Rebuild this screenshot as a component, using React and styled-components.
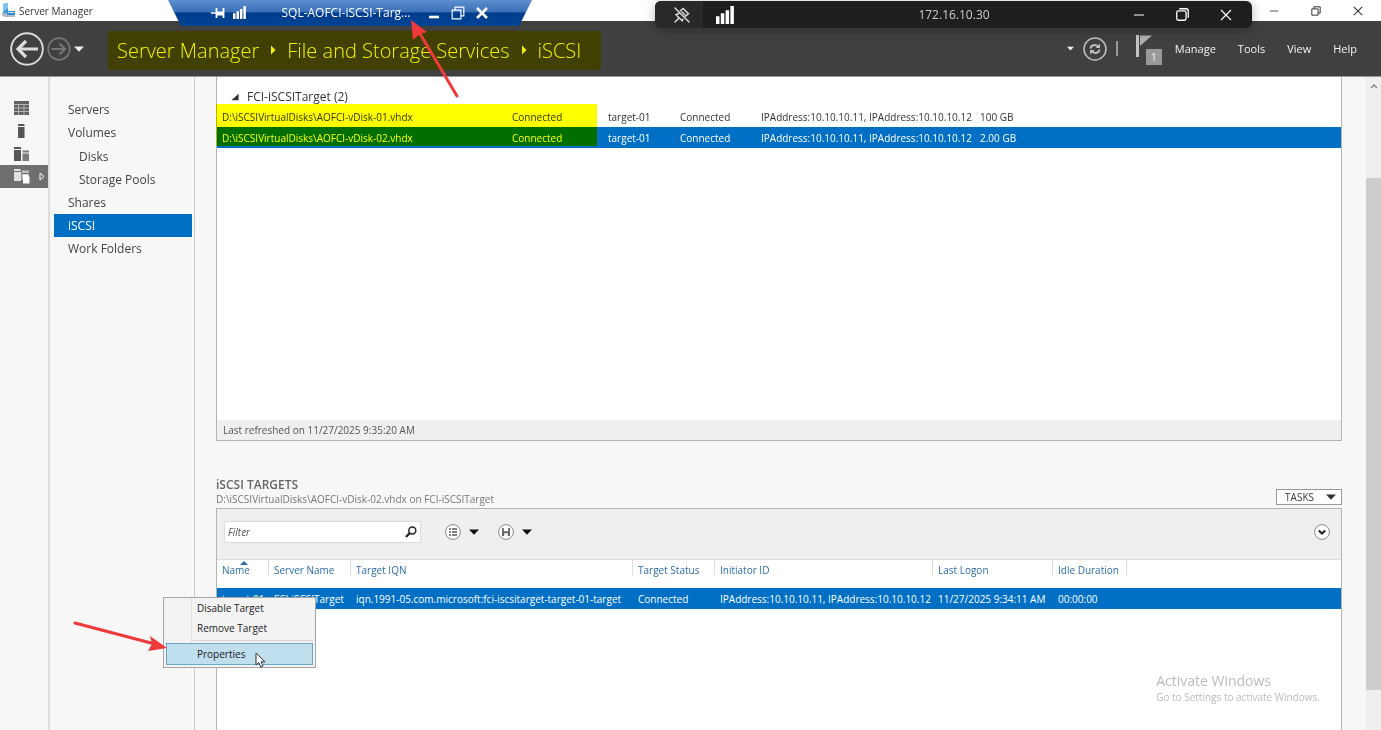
import React from "react";
import styled, { createGlobalStyle, css } from "styled-components";

const disks = [
    { path: "D:\\iSCSIVirtualDisks\\AOFCI-vDisk-01.vhdx", size: "100 GB" },
    { path: "D:\\iSCSIVirtualDisks\\AOFCI-vDisk-02.vhdx", size: "2.00 GB", selected: true },
];

const initiators = "IPAddress:10.10.10.11, IPAddress:10.10.10.12";

const targetColumns = [
    { label: "Name", width: 52, sorted: true },
    { label: "Server Name", width: 82 },
    { label: "Target IQN", width: 282 },
    { label: "Target Status", width: 82 },
    { label: "Initiator ID", width: 218 },
    { label: "Last Logon", width: 120 },
    { label: "Idle Duration", width: 74 },
];

const diskColumns = [290, 96, 72, 81, 219];

const Arrow = ({ size = 10, dir = "down" }) => (
    <svg width={size} height={size} viewBox="0 0 10 10" fill="currentColor" aria-hidden="true">
        {dir === "down" && <path d="M0 2.5h10L5 7.8z" />}
        {dir === "right" && <path d="M3 0.5v9l4.5-4.5z" />}
        {dir === "corner" && <path d="M9.5 1v8H0.5z" />}
    </svg>
);

const BackIcon = () => (
    <svg width="34" height="34" viewBox="0 0 34 34" fill="none" stroke="#dcdcdc" aria-hidden="true">
        <circle cx="17" cy="17" r="15.8" strokeWidth="1.9" />
        <path d="M28 17H9M16 9l-8 8 8 8" strokeWidth="3.2" />
    </svg>
);

const ForwardIcon = () => (
    <svg width="24" height="24" viewBox="0 0 24 24" fill="none" stroke="#757575" aria-hidden="true">
        <circle cx="12" cy="12" r="10.8" strokeWidth="1.8" />
        <path d="M4.5 12h13M12.5 6.5l5.5 5.5-5.5 5.5" strokeWidth="2.2" />
    </svg>
);

const AppIcon = () => (
    <svg width="14" height="15" viewBox="0 0 14 15" aria-hidden="true">
        <path d="M1 1l5-1v11H1z" fill="#3d9bdc" />
        <path d="M1 1l5-1v5L1 9z" fill="#7cc4f0" />
        <path d="M0 10h13v4H3L0 12.500z" fill="#a9bccb" />
        <path d="M5 8h8v4H5z" fill="#3789c9" />
        <path d="M6 9h6v1H6z" fill="#cfe6f6" />
    </svg>
);

const Signal = ({ size = 15 }) => (
    <svg width={size} height={size} viewBox="0 0 15 15" fill="#fff" aria-hidden="true">
        <path d="M0 8.500h2.900v6.500H0zM4 6h2.900v9H4zM8 3.500h2.900v11.500H8zM12 0h2.900v15H12z" />
    </svg>
);

const PinIcon = () => (
    <svg width="14" height="12" viewBox="0 0 14 12" fill="none" stroke="#fff" aria-hidden="true">
        <path d="M0 6h5" strokeWidth="1.4" />
        <path d="M5.500 1v10M12.500 1v10" strokeWidth="1.800" />
        <path d="M6 6.500h6" strokeWidth="4" />
    </svg>
);

const UnpinIcon = () => (
    <svg width="16" height="16" viewBox="0 0 16 16" fill="none" stroke="#e0e0e0" strokeWidth="1.4" strokeLinecap="round" aria-hidden="true">
        <path d="M1 1l14 14M6.500 3.800L9 1.500l5.500 5.300-3 2.400M9 12.200l-.8 1.600L2 7.800l2.800-1.300M4.500 11.500L1 15M8 5l3 3" />
    </svg>
);

const WindowGlyph = ({ kind, size = 12, weight = 1.2 }) => (
    <svg width={size} height={size} viewBox="0 0 12 12" fill="none" stroke="currentColor" strokeWidth={weight} aria-hidden="true">
        {kind === "min" && <path d="M1 6h10" />}
        {kind === "low" && <path d="M1 10h10" />}
        {kind === "max" && <path d="M1 3.500h7.500V11H1zM3.500 3.500V1H11v7.500H8.500" />}
        {kind === "round" && (
            <React.Fragment>
                <rect x="0.700" y="2.700" width="8.600" height="8.600" rx="1.500" />
                <path d="M3 .7h6.300a2 2 0 0 1 2 2V9" />
            </React.Fragment>
        )}
        {kind === "close" && <path d="M1 1l10 10M11 1L1 11" />}
    </svg>
);

const RefreshIcon = () => (
    <svg width="24" height="24" viewBox="0 0 24 24" fill="none" stroke="#bdbdbd" aria-hidden="true">
        <circle cx="12" cy="12" r="11" strokeWidth="1.5" />
        <path d="M7.500 11.500c.3-3 4.500-4.800 7.500-2M16.500 12.500c-.3 3-4.500 4.800-7.500 2" strokeWidth="2" />
        <path d="M17 6.500v4.500h-4.500zM7 17.500V13h4.500z" fill="#bdbdbd" stroke="none" />
    </svg>
);

const FlagIcon = () => (
    <svg width="18" height="24" viewBox="0 0 18 24" aria-hidden="true">
        <path d="M1 1h3v22H1z" fill="#c4c4c4" />
        <path d="M5 1.500h12L5 12z" fill="#b0b0b0" />
    </svg>
);

const DashboardIcon = () => (
    <svg width="15" height="14" viewBox="0 0 15 14" aria-hidden="true">
        <path d="M0 3h15v11H0z" fill="#b5b5b5" />
        <path d="M0 0h15v3H0zM0 4h4v2.500H0zM5 4h4.500v2.500H5zM10.500 4H15v2.500h-4.500zM0 7.500h4V10H0zM5 7.500h4.500V10H5zM10.500 7.500H15V10h-4.500zM0 11h4v3H0zM5 11h4.500v3H5zM10.500 11H15v3h-4.500z" fill="#636363" />
    </svg>
);

const ServerIcon = () => (
    <svg width="15" height="14" viewBox="0 0 15 14" fill="#555" aria-hidden="true">
        <path d="M4 0h6.500v2H4zM4 3h6.500v11H4z" />
    </svg>
);

const AllServersIcon = () => (
    <svg width="15" height="14" viewBox="0 0 15 14" aria-hidden="true">
        <path d="M0 0h7v2H0zM0 3h7v11H0z" fill="#555" />
        <path d="M8.500 3.500H15v2H8.500zM8.500 6.500H15V14H8.500z" fill="#7a7a7a" />
    </svg>
);

const StorageIcon = () => (
    <svg width="16" height="15" viewBox="0 0 16 15" aria-hidden="true">
        <path d="M0 0h6.500v2H0zM0 3h7v9H0z" fill="#e2e2e2" />
        <path d="M7.500 1.500H15V4H7.500zM7.500 5H15v6H7.500z" fill="#bebebe" />
        <path d="M9 5.500h4l2.500 2.500v6.500H9z" fill="#fff" />
    </svg>
);

const SearchIcon = () => (
    <svg width="12" height="12" viewBox="0 0 12 12" fill="none" stroke="#222" aria-hidden="true">
        <circle cx="7.300" cy="4.500" r="3.500" strokeWidth="1.500" />
        <path d="M4.800 7L1 11" strokeWidth="2.200" />
    </svg>
);

const RoundIcon = ({ kind }) => (
    <svg width="16" height="16" viewBox="0 0 16 16" aria-hidden="true">
        <circle cx="8" cy="8" r="7.400" fill="#fff" stroke="#8a8a8a" />
        {kind === "list" && <path d="M4 5h2M7 5h5M4 8h2M7 8h5M4 11h2M7 11h5" stroke="#555" strokeWidth="1.400" />}
        {kind === "save" && <path d="M4 4h8v8H4zM5.800 4h4.400v3.300H5.800zM6.200 9.300h3.600V12H6.200z" fill="#666" fillRule="evenodd" />}
        {kind === "expand" && <path d="M4.800 6.500L8 9.500l3.200-3" fill="none" stroke="#222" strokeWidth="2.200" />}
    </svg>
);

const Pointer = () => (
    <svg width="11" height="16" viewBox="0 0 11 16" aria-hidden="true">
        <path d="M1 1v12l2.800-2.500L5.800 15l2.200-1-2-4.200h4z" fill="#fff" stroke="#333" />
    </svg>
);

const App = () => (
    <Page>
        <GlobalStyle />
        <TitleBar>
            <AppIcon />
            <Title>Server Manager</Title>
            <WindowButtons>
                <IconButton aria-label="Minimize"><WindowGlyph kind="min" size={10} weight={1} /></IconButton>
                <IconButton aria-label="Restore"><WindowGlyph kind="max" size={10} /></IconButton>
                <IconButton aria-label="Close"><WindowGlyph kind="close" size={10} weight={1.3} /></IconButton>
            </WindowButtons>
        </TitleBar>

        <Header>
            <History>
                <IconButton aria-label="Back"><BackIcon /></IconButton>
                <IconButton aria-label="Forward"><ForwardIcon /></IconButton>
                <IconButton aria-label="Recent pages"><Arrow /></IconButton>
            </History>
            <Breadcrumbs aria-label="Breadcrumb">
                <a href="#server-manager">Server Manager</a>
                <Arrow dir="right" />
                <a href="#storage">File and Storage Services</a>
                <Arrow dir="right" />
                <a href="#iscsi">iSCSI</a>
            </Breadcrumbs>
            <HeaderTools>
                <IconButton aria-label="More"><Arrow size={7} /></IconButton>
                <IconButton aria-label="Refresh"><RefreshIcon /></IconButton>
                <Divider />
                <Notifications aria-label="1 notification">
                    <FlagIcon />
                    <Badge>1</Badge>
                </Notifications>
            </HeaderTools>
            <Menu>
                {["Manage", "Tools", "View", "Help"].map((item) => (
                    <MenuButton key={item}>{item}</MenuButton>
                ))}
            </Menu>
        </Header>

        <Body>
            <Rail>
                <RailButton aria-label="Dashboard"><DashboardIcon /></RailButton>
                <RailButton aria-label="Local Server"><ServerIcon /></RailButton>
                <RailButton aria-label="All Servers"><AllServersIcon /></RailButton>
                <RailButton aria-label="File and Storage Services" $active>
                    <StorageIcon />
                    <svg width="6" height="9" viewBox="0 0 6 9" fill="none" stroke="#fff" aria-hidden="true">
                        <path d="M1 1v7l4-3.500z" />
                    </svg>
                </RailButton>
            </Rail>

            <Nav>
                <NavLink href="#servers">Servers</NavLink>
                <NavLink href="#volumes">Volumes</NavLink>
                <SubNav>
                    <NavLink href="#disks" $nested>Disks</NavLink>
                    <NavLink href="#pools" $nested>Storage Pools</NavLink>
                </SubNav>
                <NavLink href="#shares">Shares</NavLink>
                <NavLink href="#iscsi" $active>iSCSI</NavLink>
                <NavLink href="#work-folders">Work Folders</NavLink>
            </Nav>

            <Main>
                <DiskPanel>
                    <GroupButton>
                        <Arrow size={8} dir="corner" />
                        FCI-iSCSITarget (2)
                    </GroupButton>
                    <Table>
                        <colgroup>
                            {diskColumns.map((width, number) => <Col key={number} $width={width} />)}
                            <col />
                        </colgroup>
                        <tbody>
                            {disks.map(({ path, size, selected }) => (
                                <Row key={path} $selected={selected}>
                                    <td>{path}</td>
                                    <td>Connected</td>
                                    <td>target-01</td>
                                    <td>Connected</td>
                                    <td>{initiators}</td>
                                    <td>{size}</td>
                                </Row>
                            ))}
                        </tbody>
                    </Table>
                    <RowHighlight />
                    <PanelFooter>Last refreshed on 11/27/2025 9:35:20 AM</PanelFooter>
                </DiskPanel>

                <SectionHead>
                    <div>
                        <Heading>iSCSI TARGETS</Heading>
                        <SubHeading>D:\iSCSIVirtualDisks\AOFCI-vDisk-02.vhdx on FCI-iSCSITarget</SubHeading>
                    </div>
                    <TasksButton>TASKS <Arrow /></TasksButton>
                </SectionHead>

                <TargetPanel>
                    <Toolbar>
                        <FilterBox>
                            <FilterInput type="text" placeholder="Filter" aria-label="Filter" />
                            <SearchIcon />
                        </FilterBox>
                        <ToolButton aria-label="Filter criteria"><RoundIcon kind="list" /><Arrow /></ToolButton>
                        <ToolButton aria-label="Saved queries"><RoundIcon kind="save" /><Arrow /></ToolButton>
                        <ExpandButton aria-label="Expand"><RoundIcon kind="expand" /></ExpandButton>
                    </Toolbar>
                    <Table>
                        <colgroup>
                            {targetColumns.map(({ label, width }) => <Col key={label} $width={width} />)}
                            <col />
                        </colgroup>
                        <thead>
                            <tr>
                                {targetColumns.map(({ label, sorted }) => (
                                    <HeadCell key={label} $sorted={sorted}>{label}</HeadCell>
                                ))}
                                <td />
                            </tr>
                        </thead>
                        <tbody>
                            <Row $selected>
                                <td>target-01</td>
                                <td>FCI-iSCSITarget</td>
                                <td>iqn.1991-05.com.microsoft:fci-iscsitarget-target-01-target</td>
                                <td>Connected</td>
                                <td>{initiators}</td>
                                <td>11/27/2025 9:34:11 AM</td>
                                <td>00:00:00</td>
                                <td />
                            </Row>
                        </tbody>
                    </Table>
                </TargetPanel>
            </Main>

            <ScrollTrack>
                <svg width="8" height="6" viewBox="0 0 8 6" fill="none" stroke="#8a8a8a" strokeWidth="1.500" aria-hidden="true">
                    <path d="M1 5l3-3 3 3" />
                </svg>
                <ScrollThumb />
            </ScrollTrack>
        </Body>

        <BlueBar>
            <PinIcon />
            <Signal size={13} />
            <BlueTitle>SQL-AOFCI-iSCSI-Targ...</BlueTitle>
            <IconButton aria-label="Minimize session"><WindowGlyph kind="low" weight={2.6} /></IconButton>
            <IconButton aria-label="Restore session"><WindowGlyph kind="max" size={14} weight={1} /></IconButton>
            <IconButton aria-label="Close session"><WindowGlyph kind="close" weight={2.6} /></IconButton>
        </BlueBar>

        <DarkBar>
            <UnpinButton aria-label="Unpin"><UnpinIcon /></UnpinButton>
            <SignalSlot><Signal size={18} /></SignalSlot>
            <Address>172.16.10.30</Address>
            <DarkButtons>
                <IconButton aria-label="Minimize connection"><WindowGlyph kind="min" /></IconButton>
                <IconButton aria-label="Restore connection"><WindowGlyph kind="round" size={13} /></IconButton>
                <IconButton aria-label="Close connection"><WindowGlyph kind="close" /></IconButton>
            </DarkButtons>
        </DarkBar>

        <ContextMenu role="menu">
            <MenuItem role="menuitem">Disable Target</MenuItem>
            <MenuItem role="menuitem">Remove Target</MenuItem>
            <MenuLine />
            <MenuItem role="menuitem" $active>Properties <Pointer /></MenuItem>
        </ContextMenu>

        <Watermark>
            <h2>Activate Windows</h2>
            <p>Go to Settings to activate Windows.</p>
        </Watermark>

        <Annotations viewBox="0 0 480 670" aria-hidden="true">
            <path d="M457 96L419 32M75 623l76 20" stroke="#ee3a3a" strokeWidth="3" fill="none" strokeLinecap="round" />
            <path d="M411 20l16 12-7 2-7 6zM167 648l-19 3 4-7-2-8z" fill="#ee3a3a" />
        </Annotations>
    </Page>
);

const GlobalStyle = createGlobalStyle`
  * {
    box-sizing: border-box;
  }

  body {
    margin: 0;
    background: #f7f7f7;
    color: #333;
    font-family: "Open Sans", "Noto Sans", sans-serif;
    font-size: 12px;
  }

  button, input {
    font: inherit;
    color: inherit;
    border: 0;
    background: none;
    padding: 0;
  }

  a {
    color: inherit;
    text-decoration: none;
  }

  svg {
    display: block;
    flex: none;
  }
`;

const Page = styled.div`
  position: relative;
  display: flex;
  flex-direction: column;
  height: 100vh;
  overflow: hidden;
`;

const IconButton = styled.button`
  display: flex;
  align-items: center;
  justify-content: center;
`;

const TitleBar = styled.div`
  display: flex;
  align-items: center;
  gap: 3px;
  height: 21px;
  padding: 0 18px 0 2px;
  background: #fff;
`;

const Title = styled.span`
  font-size: 10px;
`;

const WindowButtons = styled.div`
  display: flex;
  gap: 32px;
  margin-left: auto;
`;

const Header = styled.header`
  display: flex;
  align-items: center;
  height: 56px;
  padding: 0 24px 0 10px;
  background: #404040;
  border-bottom: 1px solid #999;
  color: #eee;
`;

const History = styled.div`
  display: flex;
  align-items: center;
  gap: 3px;
  width: 98px;
`;

const Breadcrumbs = styled.nav`
  display: flex;
  align-items: center;
  gap: 9px;
  height: 39px;
  padding: 0 20px 0 9px;
  margin-top: 3px;
  background: #404000;
  color: #f2f200;
  font-size: 20px;
  font-weight: 300;
  white-space: nowrap;
`;

const HeaderTools = styled.div`
  display: flex;
  align-items: center;
  gap: 9px;
  margin-left: auto;
`;

const Divider = styled.span`
  width: 2px;
  height: 15px;
  background: #999;
`;

const Notifications = styled.button`
  display: flex;
  position: relative;
  width: 28px;
  height: 30px;
  margin-left: 8px;
`;

const Badge = styled.span`
  position: absolute;
  right: 1px;
  bottom: -1px;
  width: 16px;
  height: 16px;
  background: #999;
  font-size: 11px;
  line-height: 16px;
`;

const Menu = styled.div`
  display: flex;
  gap: 22px;
  margin-left: 12px;
`;

const MenuButton = styled.button`
  font-size: 11px;
  color: #f2f2f2;
`;

const Body = styled.div`
  display: flex;
  flex: 1;
  min-height: 0;
`;

const Rail = styled.div`
  width: 50px;
  padding-top: 19px;
  border-right: 2px solid #ddd;
`;

const RailButton = styled.button`
  display: flex;
  align-items: center;
  gap: 9px;
  width: 100%;
  height: 23px;
  padding-left: 14px;
  background: ${({ $active }) => ($active ? "#6f6f6f" : "none")};
`;

const Nav = styled.nav`
  width: 145px;
  padding: 21px 2px 0 4px;
  border-right: 1px solid #ccc;
`;

const SubNav = styled.div`
  margin: 1px 0 0;
`;

const NavLink = styled.a`
  display: block;
  height: 23px;
  padding-left: ${({ $nested }) => ($nested ? "25px" : "14px")};
  font-size: 12px;
  line-height: 23px;
  color: ${({ $active }) => ($active ? "#fff" : "#444")};
  background: ${({ $active }) => ($active ? "#006fc4" : "none")};
`;

const Main = styled.main`
  display: flex;
  flex: 1;
  flex-direction: column;
  min-width: 0;
  padding: 0 24px 0 21px;
`;

const panel = css`
  display: flex;
  flex-direction: column;
  position: relative;
  background: #fff;
  border: 1px solid #b4b4b4;
`;

const DiskPanel = styled.section`
  ${panel}
  min-height: 364px;
  padding-top: 10px;
  border-top: 0;
`;

const GroupButton = styled.button`
  display: flex;
  align-items: center;
  gap: 8px;
  height: 19px;
  padding-left: 14px;
`;

const Table = styled.table`
  width: 100%;
  table-layout: fixed;
  border-collapse: collapse;
  font-size: 10px;
  white-space: nowrap;

  td, th {
    height: 21px;
    padding: 0 0 0 5px;
    text-align: left;
    font-weight: 400;
  }
`;

const Col = styled.col`
  width: ${({ $width }) => $width}px;
`;

const Row = styled.tr`
  color: ${({ $selected }) => ($selected ? "#fff" : "#333")};
  background: ${({ $selected }) => ($selected ? "#006fc4" : "none")};
`;

const HeadCell = styled.th`
  && {
    position: relative;
    height: 28px;
    padding-bottom: 8px;
    color: #2b6cab;
    background: linear-gradient(#ddd, #ddd) right top / 1px 15px no-repeat;
  }

  ${({ $sorted }) => $sorted && css`
    &::before {
      content: "";
      position: absolute;
      top: 1px;
      left: 23px;
      border: 4px solid transparent;
      border-top: 0;
      border-bottom-color: #2b6cab;
    }
  `}
`;

/* marker pen over the first two columns */
const RowHighlight = styled.div`
  position: absolute;
  top: 27px;
  left: -1px;
  width: 381px;
  height: 42px;
  background: #ff0;
  mix-blend-mode: multiply;
`;

const PanelFooter = styled.div`
  height: 20px;
  margin-top: auto;
  padding-left: 6px;
  background: #efefef;
  font-size: 10px;
  line-height: 20px;
  color: #555;
`;

const SectionHead = styled.div`
  display: flex;
  align-items: flex-end;
  justify-content: space-between;
  padding: 37px 0 2px;
`;

const Heading = styled.h1`
  margin: 0;
  font-size: 12px;
  font-weight: 600;
  line-height: 14px;
  color: #666;
`;

const SubHeading = styled.p`
  margin: 0;
  font-size: 10px;
  line-height: 14px;
  color: #777;
`;

const TasksButton = styled.button`
  display: flex;
  align-items: center;
  gap: 12px;
  height: 16px;
  margin-bottom: 1px;
  padding: 0 5px 0 8px;
  border: 1px solid #999;
  background: #fff;
  font-size: 10px;
`;

const TargetPanel = styled.section`
  ${panel}
  flex: 1;
  border-bottom: 0;
`;

const Toolbar = styled.div`
  display: flex;
  align-items: center;
  gap: 24px;
  height: 51px;
  padding: 0 11px 5px 7px;
  background: #efefef;
  border-bottom: 1px solid #ddd;
  color: #111;
`;

const FilterBox = styled.div`
  display: flex;
  align-items: center;
  width: 197px;
  height: 22px;
  padding: 0 3px;
  background: #fff;
  border: 1px solid #ddd;
`;

const FilterInput = styled.input`
  flex: 1;
  min-width: 0;
  font-size: 10px;
  font-style: italic;
  outline: 0;

  &::placeholder {
    color: #555;
  }
`;

const ToolButton = styled.button`
  display: flex;
  align-items: center;
  gap: 8px;
  margin-right: -5px;
`;

const ExpandButton = styled.button`
  margin-left: auto;
`;

const ScrollTrack = styled.div`
  display: flex;
  flex-direction: column;
  align-items: center;
  width: 15px;
  padding: 6px 0 40px;
  background: #efefef;
`;

const ScrollThumb = styled.div`
  flex: 1;
  width: 100%;
  margin-top: 89px;
  background: #cdcdcd;
`;

const BlueBar = styled.div`
  position: absolute;
  top: 0;
  left: 168px;
  display: flex;
  align-items: center;
  gap: 8px;
  width: 364px;
  height: 26px;
  padding: 0 42px 1px 43px;
  background: linear-gradient(#5e8fce, #3a70b8 45%, #003c8c 50%, #004494);
  clip-path: polygon(0 0, 100% 0, 351px 100%, 13px 100%);
  color: #fff;

  button {
    width: 16px;
  }
`;

const BlueTitle = styled.span`
  flex: 1;
  padding-left: 20px;
  font-size: 12px;
  text-align: center;
  white-space: nowrap;
`;

const DarkBar = styled.div`
  position: absolute;
  top: 1px;
  left: 655px;
  display: grid;
  grid-template-columns: 48px 44px 1fr 119px;
  align-items: center;
  width: 597px;
  height: 27px;
  overflow: hidden;
  border-radius: 6px;
  background: #1e1e1e;
  box-shadow: 0 2px 12px rgba(0, 0, 0, 0.3);
  color: #fff;
`;

const UnpinButton = styled(IconButton)`
  height: 100%;
  padding-left: 6px;
  background: #292927;
`;

const SignalSlot = styled.span`
  display: flex;
  justify-content: center;
`;

const Address = styled.span`
  padding-left: 28px;
  text-align: center;
  color: #ccc;
`;

const DarkButtons = styled.div`
  display: flex;
  gap: 31px;
`;

const ContextMenu = styled.div`
  position: absolute;
  top: 597px;
  left: 163px;
  width: 153px;
  padding: 0 2px 2px;
  border: 1px solid #a5a5a5;
  background: linear-gradient(#e0e0e0, #e0e0e0) 27px 0 / 1px 100% no-repeat #f3f3f3;
`;

const MenuItem = styled.button`
  display: flex;
  align-items: center;
  gap: 10px;
  width: 100%;
  height: ${({ $active }) => ($active ? "22px" : "20px")};
  padding-left: 30px;
  border: 1px solid ${({ $active }) => ($active ? "#6ba6c9" : "transparent")};
  background: ${({ $active }) => ($active ? "#bfdeee" : "none")};
  color: #222;
  font-size: 10px;

  svg {
    align-self: flex-end;
    margin-bottom: -4px;
  }
`;

const MenuLine = styled.hr`
  margin: 2px 0 2px 27px;
  border: 0;
  border-top: 1px solid #d5d5d5;
`;

const Watermark = styled.div`
  position: absolute;
  right: 61px;
  bottom: 25px;
  color: #bbb;

  h2 {
    margin: 0;
    font-size: 14px;
    font-weight: 400;
    line-height: 16px;
  }

  p {
    margin: 0;
    font-size: 10px;
    line-height: 16px;
  }
`;

const Annotations = styled.svg`
  position: absolute;
  top: 0;
  left: 0;
  width: 480px;
  height: 670px;
  pointer-events: none;
`;

export default App;
